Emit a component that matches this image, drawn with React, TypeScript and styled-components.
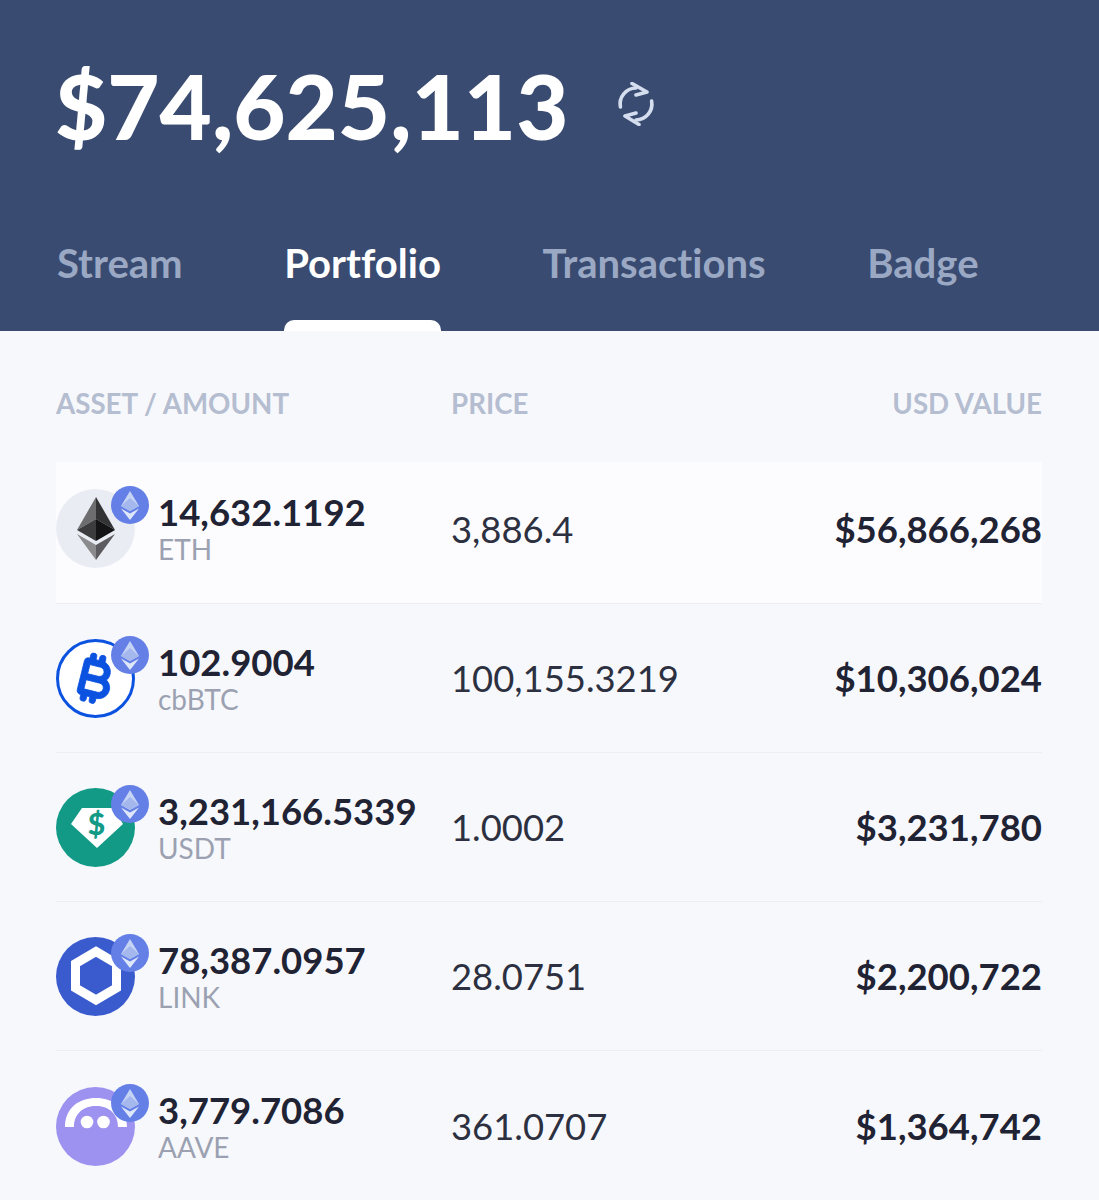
import React from 'react';
import styled, { createGlobalStyle } from 'styled-components';
import { FaBitcoinSign } from 'react-icons/fa6';

const Global = createGlobalStyle`
  html, body { margin: 0; padding: 0; background: #f7f8fc; }
  body { font-family: Lato, "Open Sans", sans-serif; font-variant-ligatures: none; }
`;

const Page = styled.div`
  width: 1099px;
  height: 1200px;
  overflow: hidden;
  background: #f7f8fc;
`;
const Header = styled.header`
  height: 331px;
  background: #394b70;
  box-sizing: border-box;
  padding: 55px 57px 0;
  display: flex;
  flex-direction: column;
`;
const BalanceRow = styled.div`
  display: flex;
  align-items: center;
  gap: 49px;
  height: 100px;
`;
const Balance = styled.div`
  font-size: 90.2px;
  font-weight: 900;
  line-height: 100px;
  margin-left: -2px;
  color: #fff;
`;
const RefreshIcon = styled.svg`
  width: 38px;
  height: 44px;
  margin-top: -2px;
`;
const Tabs = styled.nav`
  display: flex;
  margin-top: 81px;
  gap: 101.5px;
`;
const Tab = styled.div<{ $active?: boolean }>`
  position: relative;
  height: 95px;
  box-sizing: border-box;
  padding-top: 4px;
  font-size: 40.1px;
  line-height: 46px;
  font-weight: 700;
  color: ${p => (p.$active ? '#fff' : '#9aa8c4')};
  ${p =>
    p.$active &&
    `&::after {
      content: '';
      position: absolute;
      left: 0; right: 0; bottom: 0;
      height: 11px;
      background: #fff;
      border-radius: 10px 10px 0 0;
    }`}
`;
const Body = styled.main`
  padding: 0 57px 0 56px;
`;
const ColHead = styled.div`
  display: grid;
  grid-template-columns: 395px 1fr auto;
  height: 131px;
  align-items: start;
  padding-top: 56px;
  box-sizing: border-box;
  font-size: 27.7px;
  line-height: 34px;
  color: #b5bdd0;
  font-weight: 700;
`;
const Row = styled.div<{ $highlight?: boolean; $last?: boolean }>`
  display: grid;
  grid-template-columns: 395px 1fr auto;
  align-items: center;
  height: ${p => (p.$highlight ? '141.5px' : '149.2px')};
  padding-bottom: ${p => (p.$highlight ? '7px' : '0')};
  box-sizing: border-box;
  background: ${p => (p.$highlight ? '#fcfcfe' : 'transparent')};
  border-bottom: ${p => (p.$last ? 'none' : '1px solid #eceef4')};
`;
const AssetCell = styled.div<{ $nudge?: boolean }>`
  display: flex;
  align-items: center;
  gap: 23px;
  padding-top: ${p => (p.$nudge ? '2px' : '0')};
`;
const IconWrap = styled.div`
  position: relative;
  width: 79px;
  height: 79px;
  flex: none;
`;
const Badge = styled.svg`
  position: absolute;
  right: -14px;
  top: -3px;
  width: 38px;
  height: 38px;
`;
const Amounts = styled.div`
  display: flex;
  flex-direction: column;
  padding-top: 1px;
`;
const Amount = styled.div`
  font-size: 36.5px;
  line-height: 38px;
  font-weight: 700;
  color: #1f2333;
  white-space: nowrap;
`;
const Symbol = styled.div`
  font-size: 28px;
  line-height: 34px;
  margin-top: 1px;
  color: #9ba1b1;
`;
const Price = styled.div`
  font-size: 36.4px;
  color: #2c3040;
`;
const Value = styled.div`
  font-size: 36.5px;
  font-weight: 700;
  color: #1f2333;
  text-align: right;
`;

const Eth = () => (
  <Badge viewBox="0 0 38 38">
    <circle cx="19" cy="19" r="19" fill="#6480e6" />
    <path d="M19 5 L28 20 L19 25 L10 20Z" fill="#c5d3f5" />
    <path d="M19 12 L28 20 L19 25 L10 20Z" fill="#a5b8ee" />
    <path d="M19 27.5 L28 22.5 L19 34 L10 22.5Z" fill="#dfe7fb" />
  </Badge>
);

const IconSvg = styled.svg`
  width: 79px;
  height: 79px;
  display: block;
`;
const BtcCircle = styled.div`
  width: 79px;
  height: 79px;
  box-sizing: border-box;
  border: 3.4px solid #0b52e0;
  border-radius: 50%;
  background: #fff;
  display: flex;
  align-items: center;
  justify-content: center;
`;
const BtcGlyph = styled(FaBitcoinSign)`
  width: 34px;
  height: 50px;
  color: #0b52e0;
  stroke: currentColor;
  stroke-width: 8px;
  transform: rotate(14deg);
`;

const EthIcon = () => (
  <IconSvg viewBox="0 0 79 79">
    <circle cx="39.5" cy="39.5" r="39.5" fill="#e9edf3" />
    <path d="M40 8 L21 41 L40 30Z" fill="#6d6d70" />
    <path d="M40 8 L59 41 L40 30Z" fill="#333336" />
    <path d="M40 30 L21 41 L40 52Z" fill="#3c3c3e" />
    <path d="M40 30 L59 41 L40 52Z" fill="#141416" />
    <path d="M21 45 L40 56 L40 71Z" fill="#8b8b8e" />
    <path d="M59 45 L40 56 L40 71Z" fill="#5c5c60" />
  </IconSvg>
);
const BtcIcon = () => (
  <BtcCircle>
    <BtcGlyph />
  </BtcCircle>
);
const UsdtIcon = () => (
  <IconSvg viewBox="0 0 79 79">
    <circle cx="39.5" cy="39.5" r="39.5" fill="#129a87" />
    <path d="M26 20 H57 L67 36 L41 60 L15 36Z" fill="#fff" />
    <text
      x="40.5"
      y="47"
      textAnchor="middle"
      fontSize="30"
      fontWeight="900"
      fontFamily="Lato, sans-serif"
      fill="#129a87"
    >
      $
    </text>
  </IconSvg>
);
const LinkIcon = () => (
  <IconSvg viewBox="0 0 79 79">
    <circle cx="39.5" cy="39.5" r="39.5" fill="#3a5bcd" />
    <path d="M40 14.5 L60.5 26.5 V51 L40 63 L19.5 51 V26.5Z" fill="#3a5bcd" stroke="#fff" strokeWidth="9" />
  </IconSvg>
);
const AaveIcon = () => (
  <IconSvg viewBox="0 0 79 79">
    <circle cx="39.5" cy="39.5" r="39.5" fill="#9d92f0" />
    <path d="M9 40 C9 20 24 11 40 11 C56 11 71 20 71 40 H62 C62 26 52 19 40 19 C28 19 18 26 18 40Z" fill="#fff" />
    <circle cx="31" cy="35" r="6.3" fill="#fff" />
    <circle cx="47.5" cy="35" r="6.3" fill="#fff" />
  </IconSvg>
);

const assets = [
  { Icon: EthIcon, amount: '14,632.1192', symbol: 'ETH', price: '3,886.4', value: '$56,866,268' },
  { Icon: BtcIcon, amount: '102.9004', symbol: 'cbBTC', price: '100,155.3219', value: '$10,306,024' },
  { Icon: UsdtIcon, amount: '3,231,166.5339', symbol: 'USDT', price: '1.0002', value: '$3,231,780' },
  { Icon: LinkIcon, amount: '78,387.0957', symbol: 'LINK', price: '28.0751', value: '$2,200,722' },
  { Icon: AaveIcon, amount: '3,779.7086', symbol: 'AAVE', price: '361.0707', value: '$1,364,742' },
];

const Refresh = () => (
  <RefreshIcon viewBox="0 0 38 44" fill="none" stroke="#d5deee" strokeWidth="3.6" strokeLinecap="round" strokeLinejoin="round">
    <path d="M3.4 25 A16 16 0 0 1 19 6" />
    <path d="M15 1.5 L30 10 L19 13" />
    <path d="M34.6 19 A16 16 0 0 1 19 38" />
    <path d="M22 42.5 L8 34 L19 31" />
  </RefreshIcon>
);

export default function App() {
  return (
    <Page>
      <Global />
      <Header>
        <BalanceRow>
          <Balance>$74,625,113</Balance>
          <Refresh />
        </BalanceRow>
        <Tabs>
          <Tab>Stream</Tab>
          <Tab $active>Portfolio</Tab>
          <Tab>Transactions</Tab>
          <Tab>Badge</Tab>
        </Tabs>
      </Header>
      <Body>
        <ColHead>
          <div>ASSET / AMOUNT</div>
          <div>PRICE</div>
          <div>USD VALUE</div>
        </ColHead>
        {assets.map((a, i) => (
          <Row key={a.symbol} $highlight={i === 0} $last={i === assets.length - 1}>
            <AssetCell $nudge={i > 0}>
              <IconWrap>
                <a.Icon />
                <Eth />
              </IconWrap>
              <Amounts>
                <Amount>{a.amount}</Amount>
                <Symbol>{a.symbol}</Symbol>
              </Amounts>
            </AssetCell>
            <Price>{a.price}</Price>
            <Value>{a.value}</Value>
          </Row>
        ))}
      </Body>
    </Page>
  );
}
